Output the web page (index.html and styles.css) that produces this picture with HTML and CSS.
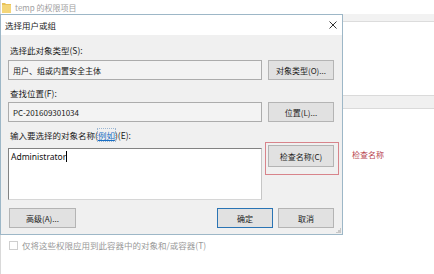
FILE: index.html
```html
<!DOCTYPE html>
<html lang="zh-CN">
<head>
    <meta charset="UTF-8">
    <title>选择用户或组</title>
    <link rel="stylesheet" href="styles.css">
</head>
<body>

<div class="owner">
    <div class="owner-title">
        <svg class="folder" width="9" height="11" viewBox="0 0 9 11">
            <path d="M0 1h3l1 1h5v9H0z" fill="#e8c25a"/>
            <path d="M0 3h9v8H0z" fill="#f4d679"/>
        </svg>
        <span>temp 的权限项目</span>
    </div>
    <div class="owner-strip"></div>
    <div class="owner-band"></div>
    <div class="owner-check">
        <span class="checkbox"></span>
        <span>仅将这些权限应用到此容器中的对象和/或容器(T)</span>
    </div>
    <div class="note">检查名称</div>
</div>

<div class="dialog">
    <div class="dialog-title">
        <span>选择用户或组</span>
        <svg class="close" width="8" height="8" viewBox="0 0 8 8">
            <path d="M0.5 0.5L7.5 7.5M7.5 0.5L0.5 7.5" stroke="#333" stroke-width="1"/>
        </svg>
    </div>
    <div class="dialog-body">
        <div class="label first">选择此对象类型(S):</div>
        <div class="row">
            <div class="field">用户、组或内置安全主体</div>
            <button class="btn">对象类型(O)...</button>
        </div>

        <div class="label second">查找位置(F):</div>
        <div class="row">
            <div class="field">PC-201609301034</div>
            <button class="btn">位置(L)...</button>
        </div>

        <div class="label third">输入要选择的对象名称(<a href="#">例如</a>)(E):</div>
        <div class="row names">
            <div class="name-box">Administrator<span class="caret"></span></div>
            <div class="check-wrap">
                <button class="btn">检查名称(C)</button>
                <span class="mark"></span>
            </div>
        </div>

        <div class="footer">
            <button class="btn wide">高级(A)...</button>
            <div class="actions">
                <button class="btn ok">确定</button>
                <button class="btn">取消</button>
            </div>
        </div>
        <span class="grip"></span>
    </div>
</div>

</body>
</html>
```

FILE: styles.css
```css
body {
    margin: 0;
    width: 434px;
    height: 274px;
    overflow: hidden;
    background-color: #fff;
    font-family: "Noto Sans CJK SC", "Noto Sans", sans-serif;
    font-size: 8.5px;
    color: #1a1a1a;
    position: relative;
}

.owner {
    height: 274px;
    border-left: 1px solid #d9d9d9;
    position: relative;
}

.owner-title {
    height: 14px;
    display: flex;
    align-items: center;
    gap: 4px;
    padding-left: 1px;
    color: #a0a0a0;
    font-size: 8px;
}

.owner-strip {
    height: 7px;
    background-color: #f2f2f2;
    border-bottom: 1px solid #dcdcdc;
}

.owner-band {
    margin-top: 73px;
    height: 12px;
    background-color: #f0f0f0;
    border-top: 1px solid #dadada;
    border-bottom: 1px solid #dadada;
}

.owner-check {
    margin-top: 130px;
    display: flex;
    align-items: center;
    gap: 4px;
    padding-left: 8px;
    height: 12px;
    color: #999;
}

.checkbox {
    width: 7px;
    height: 7px;
    border: 1px solid #cfcfcf;
    background-color: #fff;
}

.note {
    position: absolute;
    left: 351px;
    top: 149px;
    color: #b8454f;
    font-size: 8px;
}

.dialog {
    position: absolute;
    left: 0;
    top: 14px;
    width: 341px;
    height: 219px;
    border: 1px solid #9db7c7;
    background-color: #f0f0f0;
    display: flex;
    flex-direction: column;
}

.dialog-title {
    height: 20px;
    background-color: #fff;
    display: flex;
    align-items: center;
    justify-content: space-between;
    padding: 0 5px 0 4px;
}

.dialog-body {
    flex: 1;
    padding: 9px 8px 0 7px;
    position: relative;
}

.label {
    line-height: 12px;
    height: 12px;
    margin-left: 2px;
}

.label.first {
    margin-bottom: 4px;
}

.label.second {
    margin-top: 7px;
    margin-bottom: 3px;
}

.label.third {
    margin-top: 7px;
    margin-bottom: 7px;
}

.label a {
    color: #1a6fc4;
    text-decoration: underline;
    outline: 1px dotted #9bb6d2;
}

.row {
    display: flex;
    gap: 6px;
    height: 20px;
}

.field {
    width: 244px;
    padding: 0 4px;
    border: 1px solid #acacac;
    background-color: #f3f3f3;
    display: flex;
    align-items: center;
    font-size: 8px;
}

.btn {
    width: 66px;
    height: 20px;
    padding: 0;
    border: 1px solid #b4b4b4;
    background-color: #e1e1e1;
    font-family: inherit;
    font-size: 8px;
    color: #1a1a1a;
}

.row.names {
    height: 50px;
}

.name-box {
    width: 250px;
    height: 48px;
    padding: 1px 2px;
    border: 1px solid #828282;
    border-right-color: #c6c6c6;
    border-bottom-color: #d6d6d6;
    background-color: #fff;
    font-family: "Noto Sans", "Open Sans", sans-serif;
    font-size: 8.5px;
    line-height: 14px;
    color: #111;
}

.caret {
    display: inline-block;
    width: 1px;
    height: 11px;
    background-color: #000;
    vertical-align: -2px;
}

.check-wrap {
    position: relative;
    margin-top: -3px;
    height: 22px;
}

.check-wrap .btn {
    height: 22px;
}

.mark {
    position: absolute;
    left: -3px;
    top: -3px;
    width: 72px;
    height: 31px;
    border: 1px solid #d8848b;
}

.footer {
    margin-top: 10px;
    display: flex;
    justify-content: space-between;
    margin-left: 1px;
}

.btn.wide {
    width: 67px;
}

.actions {
    display: flex;
    gap: 5px;
}

.actions .btn {
    width: 56px;
}

.btn.ok {
    border: 1px solid #2a74b4;
}

.grip {
    position: absolute;
    right: 1px;
    bottom: 1px;
    width: 5px;
    height: 5px;
    background: linear-gradient(135deg, transparent 50%, #c8c8c8 50%);
}
```
